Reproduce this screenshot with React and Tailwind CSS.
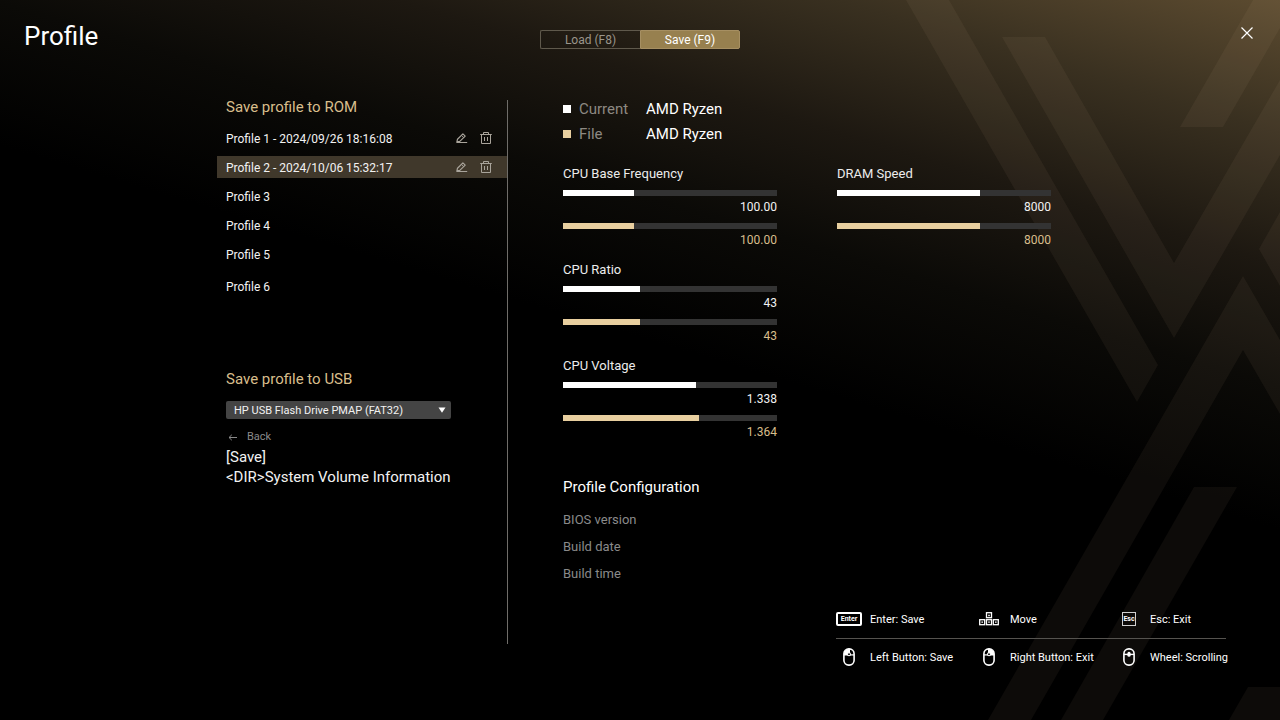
import React from "react";

const profiles = [
  { name: "Profile 1 - 2024/09/26 18:16:08", saved: true },
  { name: "Profile 2 - 2024/10/06 15:32:17", saved: true, selected: true },
  { name: "Profile 3" },
  { name: "Profile 4" },
  { name: "Profile 5" },
  { name: "Profile 6" },
];

const stats = [
  { label: "CPU Base Frequency", current: ["100.00", 33.3], file: ["100.00", 33.3] },
  { label: "DRAM Speed", current: ["8000", 66.6], file: ["8000", 66.6] },
  { label: "CPU Ratio", current: ["43", 35.8], file: ["43", 35.8], first: true },
  { label: "CPU Voltage", current: ["1.338", 62], file: ["1.364", 63.4], first: true },
];

function Backdrop() {
  return (
    <svg
      className="pointer-events-none absolute inset-0 h-full w-full"
      viewBox="0 0 1280 720"
      preserveAspectRatio="xMaxYMin slice"
      aria-hidden="true"
    >
      <g fill="#f8deb4" fillOpacity="0.05">
        <path d="M906 0H949L1158 365L1137 402Z" />
        <path d="M1002 37H1045L1174 263L1280 80V155L1174 338Z" />
        <path d="M1180 127H1223L1280 28V0H1253Z" />
        <path d="M1259 249L1280 212V286Z" />
        <path d="M1243 276L1280 340V414L1243 350L1031 720H988Z" />
        <path d="M1194 487H1237L1103 720H1061Z" />
        <path d="M1248 687H1280V720H1229Z" />
      </g>
    </svg>
  );
}

function EditIcon() {
  return (
    <svg width="12" height="12" viewBox="0 0 12 12" fill="none" stroke="currentColor" strokeWidth="1.2" strokeLinejoin="round">
      <path d="M0.9 9.8L1.5 7.2L6.9 1.9L9.2 4.1L3.8 9.4Z" />
      <path d="M5.4 3.4L7.7 5.6" strokeWidth="0.9" />
      <path d="M0.5 10.5H11.2" strokeWidth="1" />
    </svg>
  );
}

function TrashIcon() {
  return (
    <svg width="12" height="12" viewBox="0 0 12 12" fill="none" stroke="currentColor" strokeWidth="1">
      <path d="M0.2 2.5H11.8" />
      <path d="M3.5 2.5V0.5H8.5V2.5" />
      <path d="M1.5 2.5V11.5H10.5V2.5" />
      <path d="M4.5 5V9M7.5 5V9" />
    </svg>
  );
}

function ArrowKeysIcon() {
  return (
    <svg width="20" height="14" viewBox="0 0 20 14" fill="none" stroke="currentColor" strokeWidth="1.3">
      <rect x="7.5" y="0.7" width="5" height="5" />
      <rect x="0.7" y="7.7" width="5" height="5" />
      <rect x="7.5" y="7.7" width="5" height="5" />
      <rect x="14.3" y="7.7" width="5" height="5" />
      <path d="M9.2 3.5H10.8M2.4 10.2H4M9.2 10.2H10.8M16 10.2H17.6" />
    </svg>
  );
}

function MouseIcon({ button }) {
  return (
    <svg width="12" height="18" viewBox="0 0 12 18" fill="none" stroke="currentColor" strokeWidth="1.6">
      <rect x="0.9" y="0.9" width="10.2" height="16.2" rx="4.9" />
      {button === "left" && <path d="M1 7V5.5A5 5 0 0 1 6 1H7V7Z" fill="currentColor" stroke="none" />}
      {button === "right" && <path d="M11 7V5.5A5 5 0 0 0 6 1H5V7Z" fill="currentColor" stroke="none" />}
      {button === "wheel" ? (
        <>
          <path d="M1 6.4H11" strokeWidth="1.4" />
          <rect x="4.4" y="3.8" width="3.2" height="5" rx="1.6" fill="currentColor" stroke="none" />
        </>
      ) : (
        <>
          <path d="M1 6.9H11" strokeWidth="1.2" />
          <circle cx="6" cy="6.2" r="1.5" fill="#000" strokeWidth="1.1" />
        </>
      )}
    </svg>
  );
}

function Meter({ value, percent, barClass, textClass }) {
  return (
    <div className="flex flex-col gap-1">
      <div className="h-[6px] bg-[#333333]">
        <div className={"h-full " + barClass} style={{ width: percent + "%" }} />
      </div>
      <span className={"text-right text-xs leading-[14px] " + textClass}>{value}</span>
    </div>
  );
}

function Stat({ item }) {
  return (
    <div className={item.first ? "col-start-1" : ""}>
      <h3 className="text-[13px] leading-4 text-[#ececec]">{item.label}</h3>
      <div className="mt-2 flex flex-col gap-[9px]">
        <Meter value={item.current[0]} percent={item.current[1]} barClass="bg-white" textClass="text-[#f2f2f2]" />
        <Meter value={item.file[0]} percent={item.file[1]} barClass="bg-[#e8cf9f]" textClass="text-[#d8be8c]" />
      </div>
    </div>
  );
}

function Hint({ icon, children }) {
  return (
    <li className="flex h-5 items-center gap-2">
      <span className="flex w-[26px] justify-center">{icon}</span>
      <span className="whitespace-nowrap pt-0.5">{children}</span>
    </li>
  );
}

export default function App() {
  return (
    <div className="relative min-h-screen overflow-hidden bg-black bg-[linear-gradient(196.7deg,#5c4b30_0%,#393020_12%,#1d1811_24%,#0b0a07_35%,#000000_48%)] font-['Roboto','Liberation_Sans',sans-serif] text-white">
      <Backdrop />
      <div className="relative">
        <header className="grid h-[100px] grid-cols-[1fr_200px_1fr] items-start px-6">
          <h1 className="pt-5 text-[26px] leading-8">Profile</h1>
          <div className="mt-[30px] grid h-[18px] grid-cols-2 text-xs leading-4" role="tablist">
            <button type="button" role="tab" aria-selected="false" className="rounded-l-xs border border-r-0 border-[#5f594c] pt-px leading-4 text-[#9a958b]">
              Load (F8)
            </button>
            <button type="button" role="tab" aria-selected="true" className="rounded-r-xs border border-[#a68f62] bg-[#97804f] pt-px leading-4 text-white">
              Save (F9)
            </button>
          </div>
          <button type="button" aria-label="Close" className="mt-6 flex size-[18px] items-center justify-center justify-self-end">
            <svg width="12" height="12" viewBox="0 0 12 12" fill="none" stroke="currentColor" strokeWidth="1.2">
              <path d="M0.5 0.5L11.5 11.5M11.5 0.5L0.5 11.5" />
            </svg>
          </button>
        </header>

        <main className="flex items-start pl-[217px]">
          <section className="min-h-[544px] w-[291px] shrink-0 border-r border-[#6f6d69]">
            <h2 className="pl-[9px] text-[15px] leading-[14px] text-[#d8be8c]">Save profile to ROM</h2>
            <ul className="mt-[13px] flex flex-col gap-[7px] text-xs">
              {profiles.map((p) => (
                <li
                  key={p.name}
                  className={
                    "flex h-[22px] items-center justify-between pr-[15px] last:h-7 " +
                    (p.selected ? "bg-[#40382b]" : "")
                  }
                >
                  <button type="button" className="pl-[9px] pt-0.5 text-left text-[#f2f2f2]">{p.name}</button>
                  {p.saved && (
                    <span className="flex gap-3 text-[#a9a49b]">
                      <button type="button" aria-label="Rename"><EditIcon /></button>
                      <button type="button" aria-label="Delete"><TrashIcon /></button>
                    </span>
                  )}
                </li>
              ))}
            </ul>

            <div className="mt-[72px] pl-[9px]">
              <h2 className="text-[15px] leading-[14px] text-[#d8be8c]">Save profile to USB</h2>
              <div className="relative mt-[15px] w-[225px]">
                <select aria-label="USB drive" className="block h-[18px] w-full appearance-none rounded-xs bg-[#444444] pl-2 pr-6 pt-px text-[11px] leading-4 text-[#f2f2f2]">
                  <option>HP USB Flash Drive PMAP (FAT32)</option>
                </select>
                <svg className="pointer-events-none absolute right-[5px] top-[6px]" width="8" height="6" viewBox="0 0 8 6" fill="currentColor">
                  <path d="M0.5 0.5H7.5L4 5.8Z" />
                </svg>
              </div>
              <button type="button" className="mt-2 flex h-5 items-center gap-[10px] pl-[2px] text-[11px] text-[#8a8a8a]">
                <svg width="9" height="7" viewBox="0 0 9 7" fill="none" stroke="currentColor">
                  <path d="M9 3.5H1M3.8 0.8L1 3.5L3.8 6.2" />
                </svg>
                Back
              </button>
              <div className="flex flex-col items-start text-[15px] leading-5 text-[#f2f2f2]">
                <button type="button">[Save]</button>
                <button type="button">&lt;DIR&gt;System Volume Information</button>
              </div>
            </div>
          </section>

          <div className="flex-1 pl-[55px] pr-[54px]">
            <dl className="grid grid-cols-[16px_67px_1fr] items-center gap-y-[7px] text-[15px] leading-[18px]">
              <span className="size-2 bg-white" />
              <dt className="text-[#8d8982]">Current</dt>
              <dd>AMD Ryzen</dd>
              <span className="size-2 bg-[#e8cf9f]" />
              <dt className="text-[#8d8982]">File</dt>
              <dd>AMD Ryzen</dd>
            </dl>

            <div className="mt-[23px] grid grid-cols-[214px_214px] gap-x-[60px] gap-y-[15px]">
              {stats.map((s) => (
                <Stat key={s.label} item={s} />
              ))}
            </div>

            <section className="mt-[39px]">
              <h2 className="text-[15px] leading-[18px]">Profile Configuration</h2>
              <dl className="mt-[10px] text-[13px] leading-[27px] text-[#8a8a8a]">
                <dt>BIOS version</dt>
                <dt>Build date</dt>
                <dt>Build time</dt>
              </dl>
            </section>

            <footer className="ml-auto mt-[22px] w-[390px] text-[11px]">
              <ul className="grid grid-cols-[140px_140px_1fr] pb-[9px]">
                <Hint icon={<span className="flex h-[14px] w-[26px] items-center justify-center rounded-xs border-2 border-white text-[7px] font-bold">Enter</span>}>
                  Enter: Save
                </Hint>
                <Hint icon={<ArrowKeysIcon />}>Move</Hint>
                <Hint icon={<span className="flex size-[14px] items-center justify-center border border-[#d0d0d0] text-[7px] font-bold">Esc</span>}>
                  Esc: Exit
                </Hint>
              </ul>
              <ul className="grid grid-cols-[140px_140px_1fr] border-t border-[#55534f] pt-2">
                <Hint icon={<MouseIcon button="left" />}>Left Button: Save</Hint>
                <Hint icon={<MouseIcon button="right" />}>Right Button: Exit</Hint>
                <Hint icon={<MouseIcon button="wheel" />}>Wheel: Scrolling</Hint>
              </ul>
            </footer>
          </div>
        </main>
      </div>
    </div>
  );
}
